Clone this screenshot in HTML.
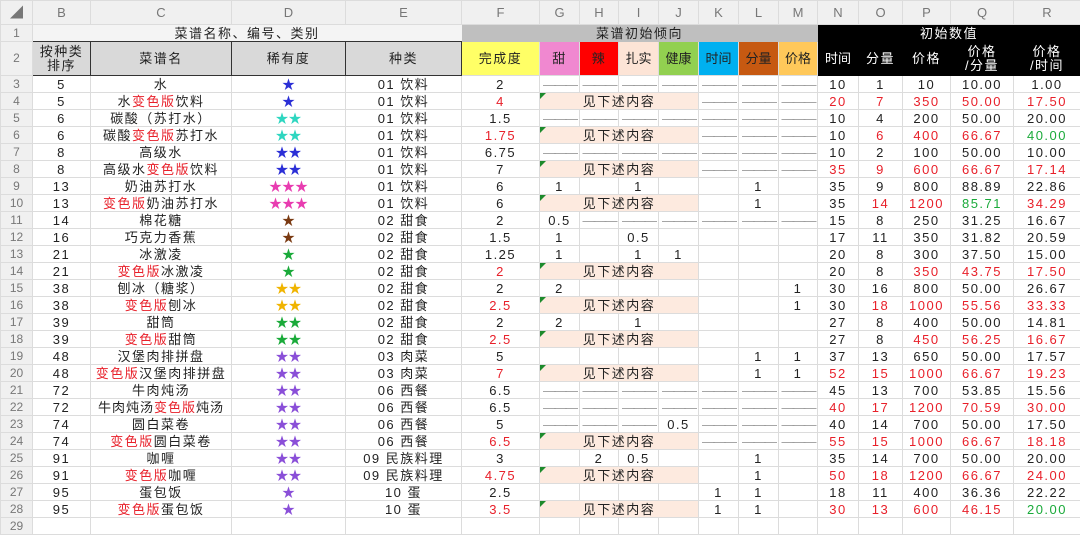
<!DOCTYPE html><html><head><meta charset="utf-8"><style>
body{margin:0;width:1080px;height:522px;overflow:hidden;background:#fff;font-family:"Liberation Sans","Noto Sans CJK SC",sans-serif;}
table{border-collapse:collapse;table-layout:fixed;width:1080px;font-size:13px;}
td{border:1px solid #dcdcdc;padding:0;text-align:center;white-space:nowrap;overflow:hidden;line-height:15px;color:#222;letter-spacing:1.5px;}
tr.r td{height:16px;}
td.n{color:#777;background:#f0f0f0;text-align:center;font-size:12px;letter-spacing:0}
tr.h td{background:#f0f0f0;color:#777;height:23px;letter-spacing:0}
.R{color:#e8202a}.G{color:#1aaa3a}.d{color:#999;letter-spacing:-2px}
.s{position:relative;background:#fdeadf}
.s:before{content:"";position:absolute;left:0;top:0;border-top:6px solid #1d8a2c;border-right:6px solid transparent}
.k{background:#000;color:#fff;border-color:#000}
.b1{color:#2b2fd6}.b2{color:#2ed6c0}.b3{color:#e83cb0}.b4{color:#7a3a12}.b5{color:#1aaa3a}.b6{color:#f0b400}.b7{color:#8a4fd8}
.b1,.b2,.b3,.b4,.b5,.b6,.b7{letter-spacing:0}
</style></head><body>
<table>
<colgroup><col style="width:32px"><col style="width:58px"><col style="width:141px"><col style="width:114px"><col style="width:116px"><col style="width:78px"><col style="width:40px"><col style="width:39px"><col style="width:40px"><col style="width:40px"><col style="width:40px"><col style="width:40px"><col style="width:39px"><col style="width:41px"><col style="width:44px"><col style="width:48px"><col style="width:63px"><col style="width:67px"></colgroup>
<tr class="h"><td>◢</td><td>B</td><td>C</td><td>D</td><td>E</td><td>F</td><td>G</td><td>H</td><td>I</td><td>J</td><td>K</td><td>L</td><td>M</td><td>N</td><td>O</td><td>P</td><td>Q</td><td>R</td></tr>
<tr class="r"><td class="n">1</td><td colspan="4" style="background:#f4f4f4;border-color:#f4f4f4;border-bottom:1px solid #333">菜谱名称、编号、类别</td><td colspan="8" style="background:#bfbfbf;border-color:#bfbfbf">菜谱初始倾向</td><td colspan="5" class="k">初始数值</td></tr>
<tr style="height:34px"><td class="n">2</td>
<td style="background:#d9d9d9;border:1px solid #333;line-height:14px">按种类<br>排序</td><td style="background:#d9d9d9;border:1px solid #333">菜谱名</td><td style="background:#d9d9d9;border:1px solid #333">稀有度</td><td style="background:#d9d9d9;border:1px solid #333">种类</td>
<td style="background:#ffff66">完成度</td><td style="background:#f088d0">甜</td><td style="background:#ff0000">辣</td><td style="background:#fde4d6;letter-spacing:0">扎实</td><td style="background:#92d050;letter-spacing:0">健康</td><td style="background:#00b0f0;letter-spacing:0">时间</td><td style="background:#c65911;letter-spacing:0">分量</td><td style="background:#ffc85a;letter-spacing:0">价格</td>
<td class="k" style="letter-spacing:0">时间</td><td class="k">分量</td><td class="k">价格</td><td class="k" style="line-height:14px">价格<br>/分量</td><td class="k" style="line-height:14px">价格<br>/时间</td></tr>
<tr class="r"><td class="n">3</td><td>5</td><td>水</td><td class="b1">★</td><td>01 饮料</td><td>2</td><td class="d">———</td><td class="d">———</td><td class="d">———</td><td class="d">———</td><td class="d">———</td><td class="d">———</td><td class="d">———</td><td>10</td><td>1</td><td>10</td><td>10.00</td><td>1.00</td></tr>
<tr class="r"><td class="n">4</td><td>5</td><td>水<span class="R">变色版</span>饮料</td><td class="b1">★</td><td>01 饮料</td><td class="R">4</td><td colspan="4" class="s">见下述内容</td><td class="d">———</td><td class="d">———</td><td class="d">———</td><td class="R">20</td><td class="R">7</td><td class="R">350</td><td class="R">50.00</td><td class="R">17.50</td></tr>
<tr class="r"><td class="n">5</td><td>6</td><td>碳酸（苏打水）</td><td class="b2">★★</td><td>01 饮料</td><td>1.5</td><td class="d">———</td><td class="d">———</td><td class="d">———</td><td class="d">———</td><td class="d">———</td><td class="d">———</td><td class="d">———</td><td>10</td><td>4</td><td>200</td><td>50.00</td><td>20.00</td></tr>
<tr class="r"><td class="n">6</td><td>6</td><td>碳酸<span class="R">变色版</span>苏打水</td><td class="b2">★★</td><td>01 饮料</td><td class="R">1.75</td><td colspan="4" class="s">见下述内容</td><td class="d">———</td><td class="d">———</td><td class="d">———</td><td>10</td><td class="R">6</td><td class="R">400</td><td class="R">66.67</td><td class="G">40.00</td></tr>
<tr class="r"><td class="n">7</td><td>8</td><td>高级水</td><td class="b1">★★</td><td>01 饮料</td><td>6.75</td><td class="d">———</td><td class="d">———</td><td class="d">———</td><td class="d">———</td><td class="d">———</td><td class="d">———</td><td class="d">———</td><td>10</td><td>2</td><td>100</td><td>50.00</td><td>10.00</td></tr>
<tr class="r"><td class="n">8</td><td>8</td><td>高级水<span class="R">变色版</span>饮料</td><td class="b1">★★</td><td>01 饮料</td><td>7</td><td colspan="4" class="s">见下述内容</td><td class="d">———</td><td class="d">———</td><td class="d">———</td><td class="R">35</td><td class="R">9</td><td class="R">600</td><td class="R">66.67</td><td class="R">17.14</td></tr>
<tr class="r"><td class="n">9</td><td>13</td><td>奶油苏打水</td><td class="b3">★★★</td><td>01 饮料</td><td>6</td><td>1</td><td></td><td>1</td><td></td><td></td><td>1</td><td></td><td>35</td><td>9</td><td>800</td><td>88.89</td><td>22.86</td></tr>
<tr class="r"><td class="n">10</td><td>13</td><td><span class="R">变色版</span>奶油苏打水</td><td class="b3">★★★</td><td>01 饮料</td><td>6</td><td colspan="4" class="s">见下述内容</td><td></td><td>1</td><td></td><td>35</td><td class="R">14</td><td class="R">1200</td><td class="G">85.71</td><td class="R">34.29</td></tr>
<tr class="r"><td class="n">11</td><td>14</td><td>棉花糖</td><td class="b4">★</td><td>02 甜食</td><td>2</td><td>0.5</td><td class="d">———</td><td class="d">———</td><td class="d">———</td><td class="d">———</td><td class="d">———</td><td class="d">———</td><td>15</td><td>8</td><td>250</td><td>31.25</td><td>16.67</td></tr>
<tr class="r"><td class="n">12</td><td>16</td><td>巧克力香蕉</td><td class="b4">★</td><td>02 甜食</td><td>1.5</td><td>1</td><td></td><td>0.5</td><td></td><td></td><td></td><td></td><td>17</td><td>11</td><td>350</td><td>31.82</td><td>20.59</td></tr>
<tr class="r"><td class="n">13</td><td>21</td><td>冰激凌</td><td class="b5">★</td><td>02 甜食</td><td>1.25</td><td>1</td><td></td><td>1</td><td>1</td><td></td><td></td><td></td><td>20</td><td>8</td><td>300</td><td>37.50</td><td>15.00</td></tr>
<tr class="r"><td class="n">14</td><td>21</td><td><span class="R">变色版</span>冰激凌</td><td class="b5">★</td><td>02 甜食</td><td class="R">2</td><td colspan="4" class="s">见下述内容</td><td></td><td></td><td></td><td>20</td><td>8</td><td class="R">350</td><td class="R">43.75</td><td class="R">17.50</td></tr>
<tr class="r"><td class="n">15</td><td>38</td><td>刨冰（糖浆）</td><td class="b6">★★</td><td>02 甜食</td><td>2</td><td>2</td><td></td><td></td><td></td><td></td><td></td><td>1</td><td>30</td><td>16</td><td>800</td><td>50.00</td><td>26.67</td></tr>
<tr class="r"><td class="n">16</td><td>38</td><td><span class="R">变色版</span>刨冰</td><td class="b6">★★</td><td>02 甜食</td><td class="R">2.5</td><td colspan="4" class="s">见下述内容</td><td></td><td></td><td>1</td><td>30</td><td class="R">18</td><td class="R">1000</td><td class="R">55.56</td><td class="R">33.33</td></tr>
<tr class="r"><td class="n">17</td><td>39</td><td>甜筒</td><td class="b5">★★</td><td>02 甜食</td><td>2</td><td>2</td><td></td><td>1</td><td></td><td></td><td></td><td></td><td>27</td><td>8</td><td>400</td><td>50.00</td><td>14.81</td></tr>
<tr class="r"><td class="n">18</td><td>39</td><td><span class="R">变色版</span>甜筒</td><td class="b5">★★</td><td>02 甜食</td><td class="R">2.5</td><td colspan="4" class="s">见下述内容</td><td></td><td></td><td></td><td>27</td><td>8</td><td class="R">450</td><td class="R">56.25</td><td class="R">16.67</td></tr>
<tr class="r"><td class="n">19</td><td>48</td><td>汉堡肉排拼盘</td><td class="b7">★★</td><td>03 肉菜</td><td>5</td><td></td><td></td><td></td><td></td><td></td><td>1</td><td>1</td><td>37</td><td>13</td><td>650</td><td>50.00</td><td>17.57</td></tr>
<tr class="r"><td class="n">20</td><td>48</td><td><span class="R">变色版</span>汉堡肉排拼盘</td><td class="b7">★★</td><td>03 肉菜</td><td class="R">7</td><td colspan="4" class="s">见下述内容</td><td></td><td>1</td><td>1</td><td class="R">52</td><td class="R">15</td><td class="R">1000</td><td class="R">66.67</td><td class="R">19.23</td></tr>
<tr class="r"><td class="n">21</td><td>72</td><td>牛肉炖汤</td><td class="b7">★★</td><td>06 西餐</td><td>6.5</td><td class="d">———</td><td class="d">———</td><td class="d">———</td><td class="d">———</td><td class="d">———</td><td class="d">———</td><td class="d">———</td><td>45</td><td>13</td><td>700</td><td>53.85</td><td>15.56</td></tr>
<tr class="r"><td class="n">22</td><td>72</td><td style="letter-spacing:1px">牛肉炖汤<span class="R">变色版</span>炖汤</td><td class="b7">★★</td><td>06 西餐</td><td>6.5</td><td class="d">———</td><td class="d">———</td><td class="d">———</td><td class="d">———</td><td class="d">———</td><td class="d">———</td><td class="d">———</td><td class="R">40</td><td class="R">17</td><td class="R">1200</td><td class="R">70.59</td><td class="R">30.00</td></tr>
<tr class="r"><td class="n">23</td><td>74</td><td>圆白菜卷</td><td class="b7">★★</td><td>06 西餐</td><td>5</td><td class="d">———</td><td class="d">———</td><td class="d">———</td><td>0.5</td><td class="d">———</td><td class="d">———</td><td class="d">———</td><td>40</td><td>14</td><td>700</td><td>50.00</td><td>17.50</td></tr>
<tr class="r"><td class="n">24</td><td>74</td><td><span class="R">变色版</span>圆白菜卷</td><td class="b7">★★</td><td>06 西餐</td><td class="R">6.5</td><td colspan="4" class="s">见下述内容</td><td class="d">———</td><td class="d">———</td><td class="d">———</td><td class="R">55</td><td class="R">15</td><td class="R">1000</td><td class="R">66.67</td><td class="R">18.18</td></tr>
<tr class="r"><td class="n">25</td><td>91</td><td>咖喱</td><td class="b7">★★</td><td>09 民族料理</td><td>3</td><td></td><td>2</td><td>0.5</td><td></td><td></td><td>1</td><td></td><td>35</td><td>14</td><td>700</td><td>50.00</td><td>20.00</td></tr>
<tr class="r"><td class="n">26</td><td>91</td><td><span class="R">变色版</span>咖喱</td><td class="b7">★★</td><td>09 民族料理</td><td class="R">4.75</td><td colspan="4" class="s">见下述内容</td><td></td><td>1</td><td></td><td class="R">50</td><td class="R">18</td><td class="R">1200</td><td class="R">66.67</td><td class="R">24.00</td></tr>
<tr class="r"><td class="n">27</td><td>95</td><td>蛋包饭</td><td class="b7">★</td><td>10 蛋</td><td>2.5</td><td></td><td></td><td></td><td></td><td>1</td><td>1</td><td></td><td>18</td><td>11</td><td>400</td><td>36.36</td><td>22.22</td></tr>
<tr class="r"><td class="n">28</td><td>95</td><td><span class="R">变色版</span>蛋包饭</td><td class="b7">★</td><td>10 蛋</td><td class="R">3.5</td><td colspan="4" class="s">见下述内容</td><td>1</td><td>1</td><td></td><td class="R">30</td><td class="R">13</td><td class="R">600</td><td class="R">46.15</td><td class="G">20.00</td></tr>
<tr class="r"><td class="n">29</td><td></td><td></td><td></td><td></td><td></td><td></td><td></td><td></td><td></td><td></td><td></td><td></td><td></td><td></td><td></td><td></td><td></td></tr>
</table>
</body></html>
